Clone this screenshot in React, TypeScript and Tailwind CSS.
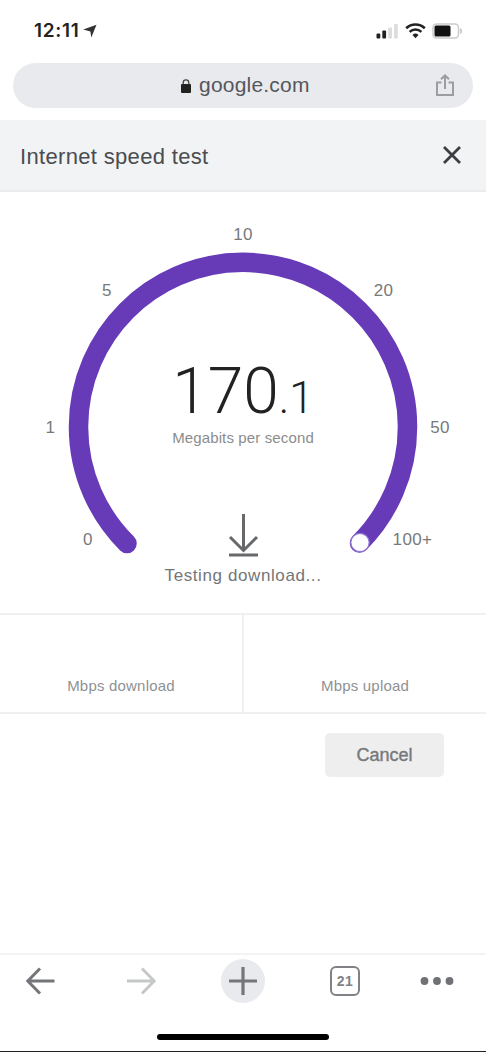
import React from "react";

function StatusBar() {
  return (
    <div className="flex h-[63px] items-start justify-between pl-[34px] pr-[23px] pt-[20px]">
      <div className="flex items-center gap-[3px] text-[19px] leading-[22px] font-semibold tracking-[0.7px] text-[#222] font-['Inter','Liberation_Sans',sans-serif]">
        <span>12:11</span>
        <svg width="14" height="14" viewBox="0 0 14 14" className="fill-[#333]">
          <path d="M13.500.8 8.300 13.500 7.400 7.500.3 5.500z" />
        </svg>
      </div>
      <div className="flex h-[22px] items-center gap-[6px]">
        <svg width="23" height="16" viewBox="0 0 23 16">
          <rect x="0.5" y="10.5" width="3.8" height="5" rx="1" fill="#222" />
          <rect x="6.3" y="7.5" width="3.8" height="8" rx="1" fill="#222" />
          <rect x="12.2" y="4.5" width="3.8" height="11" rx="1" fill="#ddd" />
          <rect x="18" y="1" width="3.8" height="14.5" rx="1" fill="#ddd" />
        </svg>
        <svg width="21" height="16" viewBox="0 0 21 16" fill="none" stroke="#222">
          <path d="M1.2 5.2a13.4 13.4 0 0 1 18.6 0" strokeWidth="2.6" />
          <path d="M4.6 8.9a8.5 8.5 0 0 1 11.8 0" strokeWidth="2.4" />
          <path d="m10.5 15.2-3-3.2a4.4 4.4 0 0 1 6 0z" fill="#222" stroke="none" />
        </svg>
        <svg width="31" height="16" viewBox="0 0 31 16">
          <rect x="1" y="1" width="25.5" height="14" rx="3.5" fill="none" stroke="#ccc" strokeWidth="1.5" />
          <rect x="2.5" y="2.5" width="16" height="11" rx="1.5" fill="#111" />
          <path d="M28 5v6c3-1.300 3-4.700 0-6z" fill="#ccc" />
        </svg>
      </div>
    </div>
  );
}

function AddressBar() {
  return (
    <div className="px-[13px]">
      <div className="flex h-[45px] items-center rounded-full bg-[#e9eaed] pl-[168px] pr-[18px]">
        <svg width="10" height="14" viewBox="0 0 10 14">
          <rect x="0" y="5" width="10" height="9" rx="1" fill="#222" />
          <path d="M2.200 5.500V3.700a2.800 2.800 0 0 1 5.600 0v1.800" fill="none" stroke="#444" strokeWidth="1.300" />
        </svg>
        <span className="ml-[8px] pb-[2px] text-[21px] leading-[24px] tracking-[0.200px] text-[#55575b]">google.com</span>
        <svg width="20" height="24" viewBox="0 0 20 24" className="ml-auto fill-none stroke-[#9b9da0]" strokeWidth="2">
          <path d="M6.500 8.500H2v12.500h16V8.500h-4.500M10 15V1.500M6 5.300 10 1.500l4 3.800" />
        </svg>
      </div>
    </div>
  );
}

const ticks = [
  { label: "0", x: 88, y: 352.5 },
  { label: "1", x: 50.5, y: 241 },
  { label: "5", x: 107, y: 104 },
  { label: "10", x: 243, y: 48 },
  { label: "20", x: 383.5, y: 104 },
  { label: "50", x: 440, y: 241 },
  { label: "100+", x: 412.5, y: 352.5 },
];

function Gauge() {
  return (
    <div className="grid h-[421px]">
      <svg width="486" height="421" viewBox="0 0 486 421" className="col-start-1 row-start-1">
        <path d="M127 351.500A164.500 164.500 0 1 1 359.500 351" fill="none" stroke="#673ab7" strokeWidth="19.500" strokeLinecap="round" />
        <circle cx="360" cy="350.500" r="9.200" fill="#fff" stroke="#9175d0" strokeWidth="1.200" />
        {ticks.map((t) => (
          <text key={t.label} x={t.x} y={t.y} textAnchor="middle" className="fill-[#77797b] text-[17px] tracking-[0.4px]">
            {t.label}
          </text>
        ))}
      </svg>
      <div className="col-start-1 row-start-1 flex flex-col items-center pt-[168px]">
        <div className="flex items-baseline font-light leading-[64px] text-[#222] font-['Roboto','Liberation_Sans',sans-serif]">
          <span className="text-[64px]">170</span>
          <span className="text-[44px]">.1</span>
        </div>
        <div className="-mt-[2px] text-[15px] leading-[20px] tracking-[0.130px] text-[#8c8c8c]">Megabits per second</div>
        <svg width="32" height="44" viewBox="0 0 32 44" className="mt-[65px] fill-none stroke-[#66686a]" strokeWidth="3">
          <path d="M16.500 1v36M3 24 16.500 37.500 30 24M2 42h29" />
        </svg>
        <div className="mt-[8px] text-[17px] leading-[22px] tracking-[0.600px] text-[#747679]">Testing download...</div>
      </div>
    </div>
  );
}

function NavBar() {
  return (
    <div className="flex h-[99px] flex-col border-t-2 border-[#f3f3f3]">
      <div className="flex items-center pl-[25px] pt-[4px]">
        <svg width="30" height="28" viewBox="0 0 30 28" className="fill-none stroke-[#747679]" strokeWidth="3">
          <path d="M29.500 14H3M15 1.500 2.800 14 15 26.500" />
        </svg>
        <svg width="30" height="28" viewBox="0 0 30 28" className="ml-[71px] fill-none stroke-[#c6c7c8]" strokeWidth="3">
          <path d="M1 14h27M16 1.500 28.200 14 16 26.500" />
        </svg>
        <div className="ml-[65px] flex size-[44px] items-center justify-center rounded-full bg-[#e8eaed]">
          <svg width="30" height="30" viewBox="0 0 30 30" className="fill-none stroke-[#747679]" strokeWidth="3.200">
            <path d="M15 1v28M1 15h28" />
          </svg>
        </div>
        <div className="ml-[65px] flex size-[30px] items-center justify-center rounded-[6px] border-[2.500px] border-[#808285] text-[14px] font-bold leading-none tracking-[0.500px] text-[#808285]">
          21
        </div>
        <svg width="34" height="8" viewBox="0 0 34 8" className="ml-[60px] fill-[#6f7174]">
          <circle cx="4.500" cy="4" r="3.900" />
          <circle cx="17" cy="4" r="3.900" />
          <circle cx="29.500" cy="4" r="3.900" />
        </svg>
      </div>
      <div className="mt-auto ml-[157px] h-[6px] w-[172px] rounded-full bg-black" />
      <div className="mt-[11px] h-[1px] bg-[#222]" />
    </div>
  );
}

export default function App() {
  return (
    <div className="flex h-[1052px] w-[486px] flex-col overflow-hidden bg-white font-['Liberation_Sans',Arial,sans-serif]">
      <StatusBar />
      <AddressBar />
      <header className="mt-[12px] flex h-[72px] items-center justify-between border-b-2 border-[#e9ebed] bg-[#f1f3f5] pl-[20px] pr-[25px]">
        <h1 className="pt-[4px] text-[22px] leading-[26px] tracking-[0.330px] text-[#4a4c50]">Internet speed test</h1>
        <svg width="18" height="18" viewBox="0 0 18 18" className="fill-none stroke-[#3c3e42]" strokeWidth="2.800">
          <path d="m1 1 16 16M17 1 1 17" />
        </svg>
      </header>
      <Gauge />
      <div className="grid h-[101px] grid-cols-[244px_1fr] border-y-2 border-[#f0f0f0] text-center text-[15px] leading-[18px] tracking-[0.200px] text-[#8f9193]">
        <div className="border-r-2 border-[#f0f0f0] pt-[62px]">Mbps download</div>
        <div className="pt-[62px]">Mbps upload</div>
      </div>
      <div className="flex justify-end pr-[42px] pt-[19px]">
        <button className="h-[44px] w-[119px] rounded-[5px] bg-[#eeeeef] text-[18px] text-[#77797b] [-webkit-text-stroke:0.4px_#77797b]">Cancel</button>
      </div>
      <div className="grow" />
      <NavBar />
    </div>
  );
}
